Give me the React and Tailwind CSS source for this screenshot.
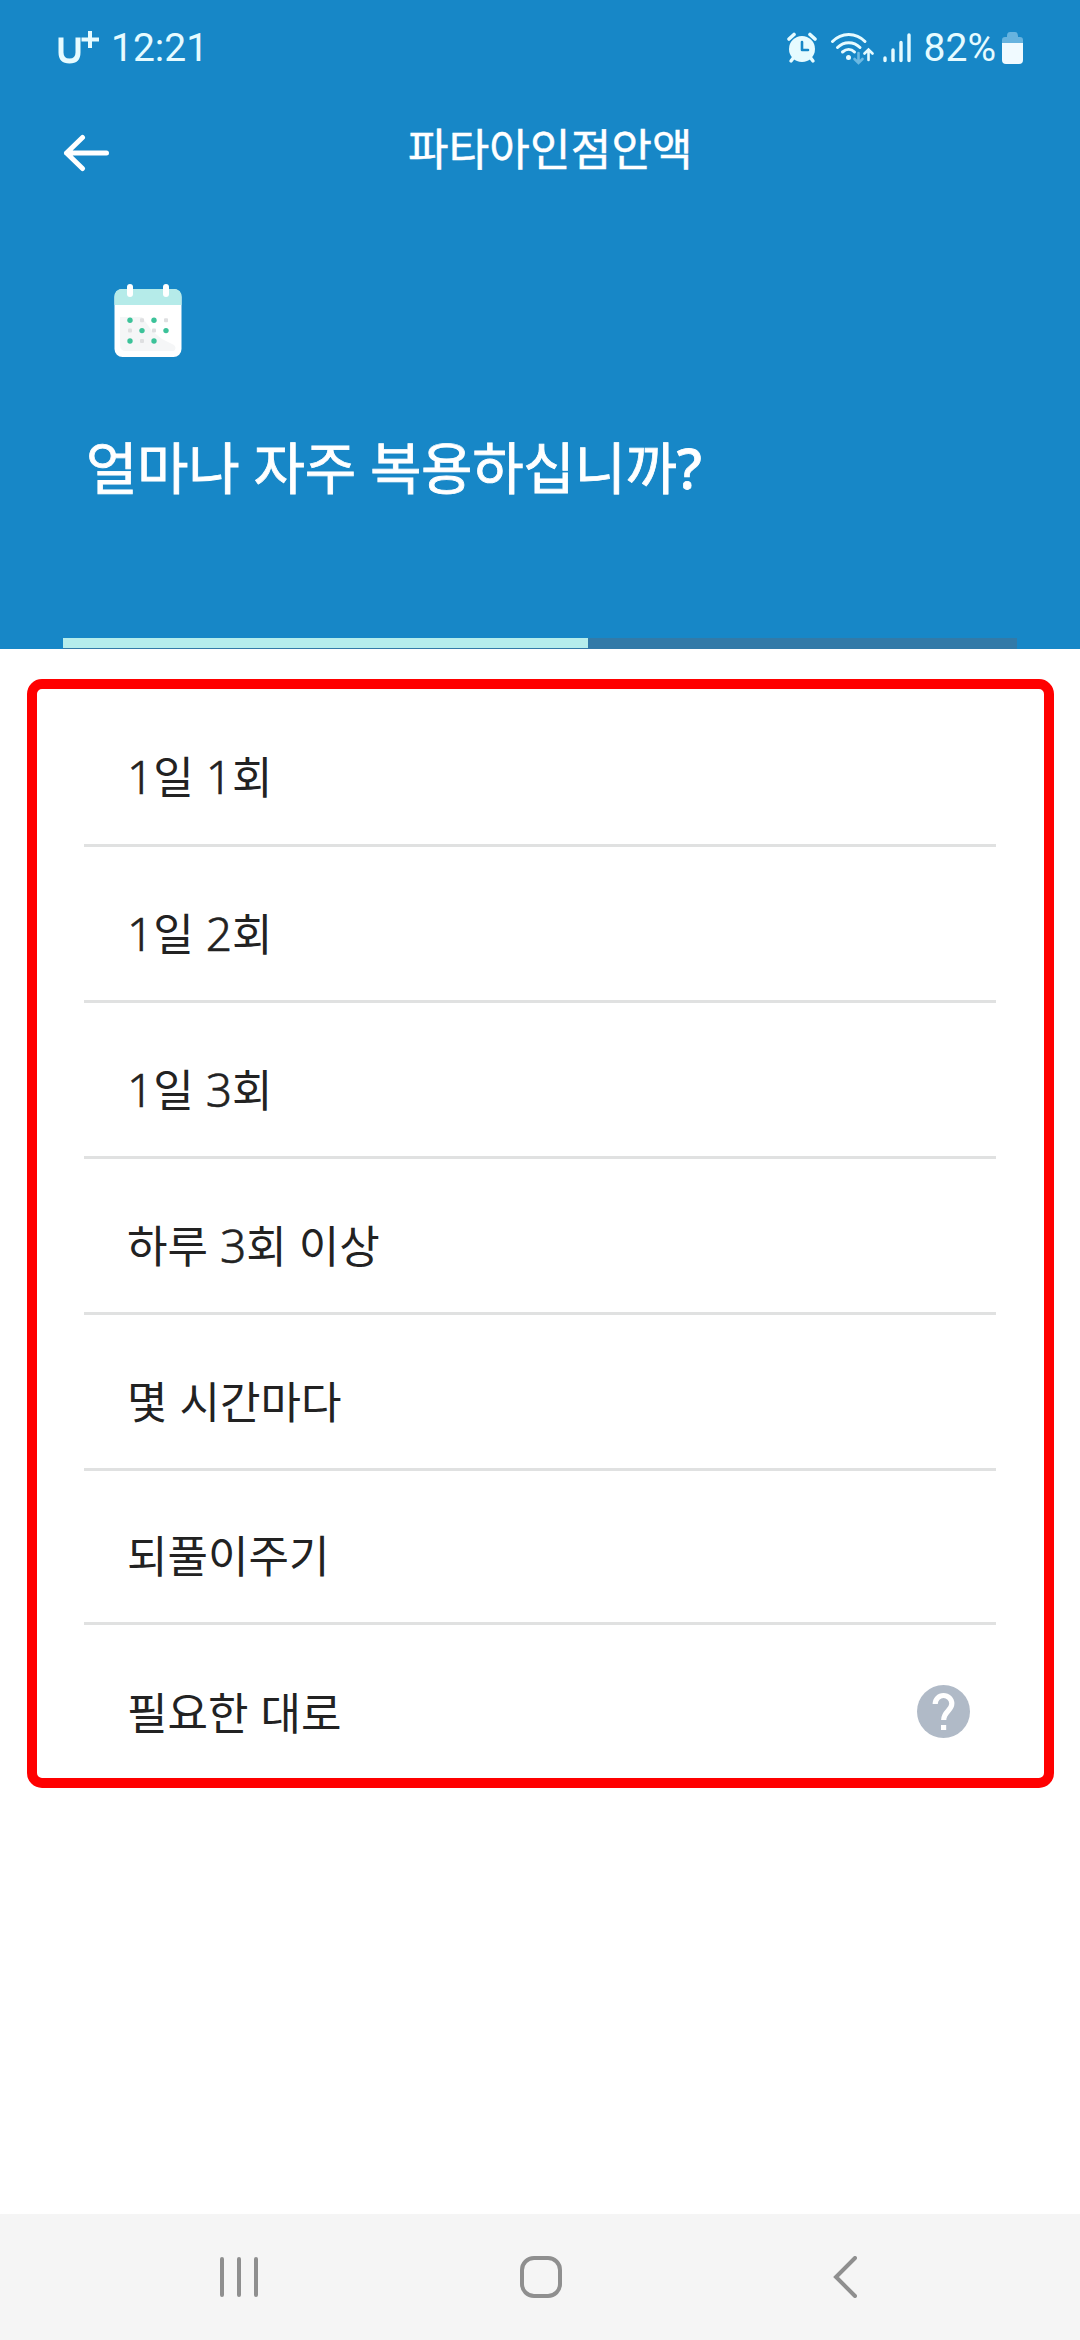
const OPTIONS = [
  { label: '1일 1회', height: 'h-[158px]' },
  { label: '1일 2회', height: 'h-[156px]' },
  { label: '1일 3회', height: 'h-[156px]' },
  { label: '하루 3회 이상', height: 'h-[156px]' },
  { label: '몇 시간마다', height: 'h-[156px]' },
  { label: '되풀이주기', height: 'h-[154px]' },
  { label: '필요한 대로', height: 'h-[153px]', help: true },
];

function AlarmIcon() {
  return (
    <svg className="w-[30px] h-[32px]" viewBox="0 0 30 32" fill="none">
      <path d="M2 7 7 2.5M28 7l-5-4.5" stroke="#e6fbff" strokeWidth="3.6" strokeLinecap="round" />
      <path d="m7 25-3 4M23 25l3 4" stroke="#e6fbff" strokeWidth="3.4" strokeLinecap="round" />
      <circle cx="15" cy="17" r="13" fill="#e6fbff" />
      <path d="M15 10v8h6" stroke="#1787c7" strokeWidth="2.6" strokeLinecap="round" strokeLinejoin="round" />
    </svg>
  );
}

function WifiIcon() {
  return (
    <svg className="w-[44px] h-[34px]" viewBox="0 0 44 34" fill="none" strokeLinecap="round" strokeWidth="3">
      <g stroke="#e6fbff">
        <path d="M2.5 10.5C11.5 1 26 1 35 10.5" />
        <path d="M7.5 16.5c6.5-6.5 16-6.5 22.5 0" />
        <path d="M12.5 21c4-3.5 8.5-3.5 12 0" />
        <path d="M38.5 29v-9M34.5 22.5l4-4 4 4" strokeWidth="2.6" />
      </g>
      <circle cx="18.5" cy="26.5" r="2.5" fill="#e6fbff" />
      <path d="M28.5 22v9M24.5 28l4 4 4-4" stroke="#6bb8e2" strokeWidth="2.6" />
    </svg>
  );
}

function SignalIcon() {
  return (
    <svg className="w-[28px] h-[30px]" viewBox="0 0 28 30" stroke="#e6fbff" strokeWidth="3.4" strokeLinecap="round">
      <path d="M2 25v2.5M10 17v10.5M18 9.5v18M26 2v25.5" />
    </svg>
  );
}

function BatteryIcon() {
  return (
    <svg className="w-[21px] h-[32px]" viewBox="0 0 21 32">
      <path d="M0 11V8q0-3 3-3h2V4q0-4 3-4h5q3 0 3 4v1h2q3 0 3 3v3z" fill="#67b3df" />
      <path d="M0 11h21v17q0 4-4 4H4q-4 0-4-4z" fill="#f0faff" />
    </svg>
  );
}

function CarrierLogo() {
  return (
    <svg className="w-[42px] h-[34px]" viewBox="0 0 42 34" fill="none" stroke="#e6fbff">
      <path d="M3 7.5v15q0 8.500 8.500 8.500t8.500-8.500v-15" strokeWidth="5" />
      <path d="M23.5 9.500h17.500M32 1v17" strokeWidth="4" />
    </svg>
  );
}

function CalendarIcon() {
  const dots = [
    [16, 36.3, 1], [28, 36.3, 0], [40, 36.3, 1], [52, 36.3, 0],
    [16, 46.6, 0], [28, 46.6, 1], [40, 46.6, 0], [52, 46.6, 1],
    [16, 57, 1], [28, 57, 0], [40, 57, 1],
  ];
  return (
    <svg className="w-[68px] h-[74px]" viewBox="0 0 68 74">
      <rect x="0.5" y="5" width="67" height="68" rx="8" fill="#fff" />
      <path d="M.5 21v-8q0-8 8-8h51q8 0 8 8v8z" fill="#b5ebe9" />
      <path d="M6 33h22l10 14 10 8 12 6q3 3 0 6H12q-6 0-6-6z" fill="#f5f6f7" />
      <rect x="13" y="0" width="6" height="13" rx="3" fill="#fff" />
      <rect x="49" y="0" width="6" height="13" rx="3" fill="#fff" />
      {dots.map(([x, y, on], i) =>
        on ? (
          <circle key={i} cx={x} cy={y} r="2.7" fill="#3cc299" />
        ) : (
          <rect key={i} x={x - 2} y={y - 2} width="4" height="4" rx="1" fill="#dedfe1" />
        )
      )}
    </svg>
  );
}

function HelpIcon() {
  return (
    <svg className="w-[53px] h-[53px]" viewBox="0 0 53 53" fill="none">
      <circle cx="26.5" cy="26.5" r="26.5" fill="#b0bac7" />
      <path d="M18.2 19c0-4.8 3.7-8.5 8.3-8.500s8.300 3.700 8.300 8.300c0 6.700-8.100 7.700-8.100 16.200" stroke="#fff" strokeWidth="5.2" />
      <rect x="24" y="40" width="5.2" height="5" fill="#fff" />
    </svg>
  );
}

function StatusBar() {
  return (
    <div className="flex h-[96px] items-center justify-between pl-[58px] pr-[57px] font-[Roboto,sans-serif] text-[39px] leading-none text-[#e6fbff]">
      <div className="flex items-center">
        <div className="-mt-[3px]">
          <CarrierLogo />
        </div>
        <span className="ml-[11px]">12:21</span>
      </div>
      <div className="flex items-center">
        <AlarmIcon />
        <div className="ml-[13px]">
          <WifiIcon />
        </div>
        <div className="ml-[9px]">
          <SignalIcon />
        </div>
        <span className="ml-[13px]">82%</span>
        <div className="ml-[6px]">
          <BatteryIcon />
        </div>
      </div>
    </div>
  );
}

function Header() {
  return (
    <header className="flex h-[649px] flex-col bg-[#1787c7] text-white">
      <StatusBar />
      <div className="flex h-[114px] items-center">
        <button className="ml-[63px] w-[46px]">
          <svg className="w-[46px] h-[38px]" viewBox="0 0 46 38" fill="none" stroke="currentColor" strokeWidth="5" strokeLinecap="round" strokeLinejoin="round">
            <path d="M43.5 19H3.5M19.5 3.5 3.5 19l16 15.5" />
          </svg>
        </button>
        <h1 className="-mt-[8px] ml-[299px] text-[44px] leading-none tracking-[0.2px] [-webkit-text-stroke:0.5px_white]">
          파타아인점안액
        </h1>
      </div>
      <div className="ml-[114px] mt-[74px]">
        <CalendarIcon />
      </div>
      <h2 className="ml-[86px] mt-[77px] text-[56px] leading-[64px] tracking-[-0.4px] [-webkit-text-stroke:0.8px_white]">
        얼마나 자주 복용하십니까<span className="font-medium">?</span>
      </h2>
      <div className="ml-[63px] mt-auto h-[11px] w-[954px] bg-[#327aa8]">
        <div className="h-[10px] w-[525px] bg-[#b5edec]" />
      </div>
    </header>
  );
}

// Digits and spaces run slightly larger and lighter than the Hangul around them
function OptionLabel({ text }) {
  return (
    <span>
      {text.split(/([\d ]+)/).map((part, i) =>
        i % 2 ? (
          <span key={i} className="text-[46px] font-light [-webkit-text-stroke:0.6px_#222]">{part}</span>
        ) : (
          part
        )
      )}
    </span>
  );
}

function NavBar() {
  return (
    <nav className="flex h-[126px] items-center bg-[#f5f5f5] pl-[220px]">
      <svg className="w-[38px] h-[42px]" viewBox="0 0 38 42" stroke="#8f8f8f" strokeWidth="4" strokeLinecap="round">
        <path d="M2 3v36M19 3v36M36 3v36" />
      </svg>
      <svg className="ml-[262px] w-[42px] h-[42px]" viewBox="0 0 42 42" fill="none" stroke="#8f8f8f" strokeWidth="4">
        <rect x="2" y="2" width="38" height="38" rx="12" />
      </svg>
      <svg className="ml-[271px] w-[24px] h-[42px]" viewBox="0 0 24 42" fill="none" stroke="#8f8f8f" strokeWidth="4" strokeLinecap="round">
        <path d="M22 2 3 21l19 19" />
      </svg>
    </nav>
  );
}

export default function App() {
  return (
    <div className="flex h-[2340px] w-[1080px] flex-col bg-white font-['Noto_Sans','Noto_Sans_CJK_KR',sans-serif]">
      <Header />
      <main className="flex-1 pl-[27px] pt-[30px]">
        <ul className="h-[1109px] w-[1027px] rounded-[15px] border-[10px] border-[#ff0000] pl-[47px] pr-[48px]">
          {OPTIONS.map(({ label, height, help }) => (
            <li
              key={label}
              className={`${height} flex items-center justify-between border-[#e0e1e1] pl-[43px] pr-[26px] text-[44px] leading-none text-[#222] ${help ? 'pt-5' : 'border-b-[3px] pt-[18px]'}`}
            >
              <OptionLabel text={label} />
              {help && <HelpIcon />}
            </li>
          ))}
        </ul>
      </main>
      <NavBar />
    </div>
  );
}
